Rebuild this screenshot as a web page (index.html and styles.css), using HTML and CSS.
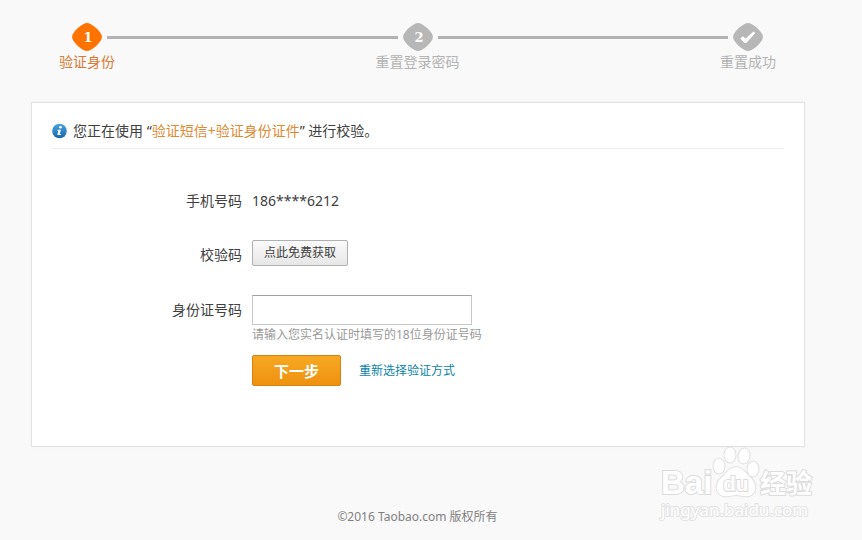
FILE: index.html
```
<!DOCTYPE html>
<html lang="zh-CN">
<head>
  <meta charset="UTF-8" />
  <meta name="viewport" content="width=device-width, initial-scale=1.0"/>
  <title>验证身份</title>
  <link rel="stylesheet" href="styles.css">
</head>
<body>

  <ol class="steps">
    <li class="step active">
      <svg class="step-icon" width="30" height="28" viewBox="0 0 30 28">
        <path class="step-shape" d="M11.500 1 Q15 -1 18.500 1 Q25 4.500 28.800 10.500 Q31 14 28.800 17.500 Q25 23.500 18.500 27 Q15 29 11.500 27 Q5 23.500 1.200 17.500 Q-1 14 1.200 10.500 Q5 4.500 11.500 1 Z"/>
        <text class="step-num" x="16" y="19">1</text>
      </svg>
      <span class="step-label">验证身份</span>
    </li>
    <li class="step-line"></li>
    <li class="step">
      <svg class="step-icon" width="30" height="28" viewBox="0 0 30 28">
        <path class="step-shape" d="M11.500 1 Q15 -1 18.500 1 Q25 4.500 28.800 10.500 Q31 14 28.800 17.500 Q25 23.500 18.500 27 Q15 29 11.500 27 Q5 23.500 1.200 17.500 Q-1 14 1.200 10.500 Q5 4.500 11.500 1 Z"/>
        <text class="step-num" x="16" y="19">2</text>
      </svg>
      <span class="step-label">重置登录密码</span>
    </li>
    <li class="step-line"></li>
    <li class="step">
      <svg class="step-icon" width="30" height="28" viewBox="0 0 30 28">
        <path class="step-shape" d="M11.500 1 Q15 -1 18.500 1 Q25 4.500 28.800 10.500 Q31 14 28.800 17.500 Q25 23.500 18.500 27 Q15 29 11.500 27 Q5 23.500 1.200 17.500 Q-1 14 1.200 10.500 Q5 4.500 11.500 1 Z"/>
        <path class="step-check" d="M7.300 15.500 L9.800 13.300 L12.500 15.600 L20.500 8.500 L22.300 10 L13.300 20 L11.500 20 Z"/>
      </svg>
      <span class="step-label">重置成功</span>
    </li>
  </ol>

  <main class="card">
    <p class="tip">
      <svg class="tip-icon" width="15" height="16" viewBox="0 0 15 16">
        <defs>
          <linearGradient id="tipBg" x1="0" y1="0" x2="0" y2="1">
            <stop offset="0" stop-color="#4ba3dc"/>
            <stop offset="1" stop-color="#1768ae"/>
          </linearGradient>
        </defs>
        <circle cx="7.500" cy="8" r="7.300" fill="url(#tipBg)"/>
        <circle cx="8.500" cy="4.300" r="1.300" fill="#fff"/>
        <path d="M5.500 6.700 H8.900 L7.800 11 H9.100 L8.800 12 H5.300 L6.400 7.700 H5.300 Z" fill="#fff"/>
      </svg>
      <span>您正在使用 “<em>验证短信+验证身份证件</em>” 进行校验。</span>
    </p>

    <form class="form">
      <div class="row">
        <span class="row-label">手机号码</span>
        <span class="phone">186****6212</span>
      </div>
      <div class="row">
        <label class="row-label" for="getCode">校验码</label>
        <button type="button" id="getCode" class="btn-code">点此免费获取</button>
      </div>
      <div class="row">
        <label class="row-label" for="idCard">身份证号码</label>
        <div class="field">
          <input type="text" id="idCard" class="text-input" aria-describedby="idHint">
          <p id="idHint" class="hint">请输入您实名认证时填写的18位身份证号码</p>
          <div class="actions">
            <button type="submit" class="btn-next">下一步</button>
            <a href="#" class="link">重新选择验证方式</a>
          </div>
        </div>
      </div>
    </form>
  </main>

  <footer class="footer">©2016 Taobao.com 版权所有</footer>

  <svg class="watermark" width="160" height="78" viewBox="0 0 160 78">
    <text class="wm-logo" x="2" y="48">Bai</text>
    <g class="wm-paw">
      <ellipse cx="60" cy="20" rx="5.500" ry="7.500"/>
      <ellipse cx="71" cy="9" rx="5.500" ry="7.500"/>
      <ellipse cx="85" cy="10" rx="5.500" ry="7.500" transform="rotate(8 85 10)"/>
      <ellipse cx="94" cy="23" rx="5.500" ry="7.500"/>
      <path d="M77 21 C70 21 67 28 62 32 C56 37 56 49 65 50 C70 51 73 49 77 49 C81 49 85 51 90 50 C98 48 98 38 92 32 C87 28 84 21 77 21 Z"/>
    </g>
    <text class="wm-du" x="64" y="45">du</text>
    <text class="wm-cn" x="101" y="47">经验</text>
    <text class="wm-url" x="2" y="70">jingyan.baidu.com</text>
  </svg>

</body>
</html>
```
FILE: styles.css
```
* {
  box-sizing: border-box;
}

body {
  position: relative;
  margin: 0;
  min-height: 100vh;
  background-color: #f9f9f9;
  color: #404040;
  font: 14px/20px "Noto Sans", "Noto Sans CJK SC", sans-serif;
}

/* steps */
.steps {
  display: flex;
  margin: 0;
  padding: 23px 94px 0 67px;
  list-style: none;
}

.step {
  display: flex;
  flex-direction: column;
  align-items: center;
  width: 40px;
  color: #b2b2b2;
}

.step-shape {
  fill: #b7b7b7;
}

.step.active {
  color: #d87a35;
}

.active .step-shape {
  fill: #ff7300;
}

.step-num {
  fill: #fff;
  font: bold 13px "DejaVu Serif", serif;
  text-anchor: middle;
}

.step-check {
  fill: #fff;
}

.step-label {
  padding-top: 1px;
  white-space: nowrap;
}

.step-line {
  flex: 1;
  height: 3px;
  margin-top: 13px;
  background-color: #b2b2b2;
}

/* card */
.card {
  margin: 30px 57px 0 31px;
  padding: 18px 20px 60px;
  background-color: #fff;
  border: 1px solid #e2e2e2;
  box-shadow: 0 0 2px #eee;
}

.tip {
  display: flex;
  align-items: center;
  gap: 6px;
  margin: 0;
  padding-bottom: 7px;
  border-bottom: 1px solid #ececec;
}

.tip-icon {
  flex: none;
}

.tip em {
  color: #e08a34;
  font-style: normal;
}

.form {
  display: flex;
  flex-direction: column;
  gap: 29px;
  padding-top: 37px;
}

.row {
  display: flex;
  align-items: flex-start;
  gap: 10px;
}

.row-label {
  width: 190px;
  padding-top: 5px;
  text-align: right;
}

.phone {
  padding-top: 5px;
}

.btn-code {
  height: 26px;
  padding: 0 11px;
  border: 1px solid #b0b0b0;
  border-radius: 2px;
  background: linear-gradient(#fbfbfb, #e6e6e6);
  color: #404040;
  font: inherit;
  font-size: 12px;
}

.text-input {
  display: block;
  width: 220px;
  height: 30px;
  padding: 4px;
  border: 1px solid #c8c8c8;
  border-top-color: #a0a0a0;
  font: inherit;
}

.hint {
  margin: 0;
  color: #999;
  font-size: 12px;
}

.actions {
  display: flex;
  align-items: center;
  gap: 18px;
  margin-top: 10px;
}

.btn-next {
  width: 89px;
  height: 31px;
  padding: 0;
  border: 1px solid #d8820e;
  border-radius: 2px;
  background: linear-gradient(#f7a823, #ee9210);
  color: #fff;
  font: inherit;
  font-size: 15px;
  font-weight: bold;
}

.link {
  color: #0a83a5;
  font-size: 12px;
  text-decoration: none;
}

.footer {
  margin-right: 27px;
  padding: 60px 0 13px;
  color: #808080;
  font-size: 12px;
  text-align: center;
}

/* watermark */
.watermark {
  position: absolute;
  right: 43px;
  bottom: 16px;
  fill: #fff;
  stroke: #dcdcdc;
  stroke-width: 2px;
  paint-order: stroke;
}

.wm-logo {
  font: bold 33px "Liberation Sans", sans-serif;
}

.wm-paw {
  stroke: #e0e0e0;
}

.wm-du {
  font: bold 21px "Liberation Sans", sans-serif;
}

.wm-cn {
  font: bold 26px "Noto Sans CJK SC", sans-serif;
}

.wm-url {
  font: 17px "Noto Sans", sans-serif;
  stroke: #e2e2e2;
}
```
